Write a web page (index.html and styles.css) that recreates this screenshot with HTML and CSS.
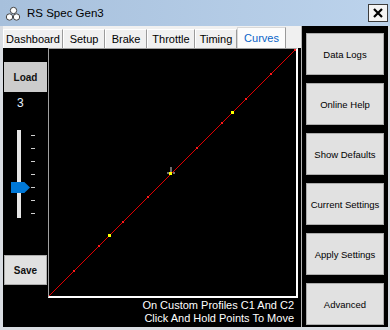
FILE: index.html
```html
<!DOCTYPE html>
<html lang="en">
  <head>
    <meta charset="UTF-8" />
    <title>RS Spec Gen3</title>
    <link rel="stylesheet" href="styles.css">
  </head>
  <body>
    <div class="window">
      <!-- Title bar -->
      <div class="titlebar">
        <svg class="app-icon" width="16" height="16" viewBox="0 0 16 16">
          <circle cx="8.5" cy="4.5" r="3.2" fill="#fff" stroke="#444" stroke-width="1"/>
          <circle cx="4.5" cy="11" r="3.2" fill="#fff" stroke="#444" stroke-width="1"/>
          <circle cx="11.5" cy="11" r="3.2" fill="#fff" stroke="#444" stroke-width="1"/>
        </svg>
        <span class="title">RS Spec Gen3</span>
        <div class="close-btn">
          <svg width="12" height="12" viewBox="0 0 12 12">
            <path d="M2 2 L10 10 M10 2 L2 10" stroke="#000" stroke-width="2.2"/>
          </svg>
        </div>
      </div>

      <div class="content">
        <!-- Left: tabs and the curves page -->
        <div class="main">
          <div class="tabs">
            <div class="tab w60">Dashboard</div>
            <div class="tab w42">Setup</div>
            <div class="tab w42">Brake</div>
            <div class="tab w48">Throttle</div>
            <div class="tab w42">Timing</div>
            <div class="tab w49 active">Curves</div>
          </div>

          <div class="page">
            <!-- Profile selector -->
            <div class="side">
              <button class="side-btn load">Load</button>
              <div class="profile-num">3</div>
              <div class="slider">
                <div class="track"></div>
                <div class="ticks">
                  <span></span><span></span><span></span><span></span>
                  <span></span><span></span><span></span>
                </div>
                <div class="thumb"></div>
              </div>
              <button class="side-btn save">Save</button>
            </div>

            <!-- Curve graph -->
            <div class="graph-col">
              <div class="graph">
                <svg width="247" height="247" viewBox="0 0 247 247">
                  <line x1="0" y1="247" x2="247" y2="0" stroke="#e00000" stroke-width="1"/>
                  <g fill="#ff1a1a">
                    <rect x="24" y="221" width="2" height="2"/>
                    <rect x="49" y="196" width="2" height="2"/>
                    <rect x="73" y="172" width="2" height="2"/>
                    <rect x="98" y="147" width="2" height="2"/>
                    <rect x="147" y="98" width="2" height="2"/>
                    <rect x="172" y="73" width="2" height="2"/>
                    <rect x="196" y="49" width="2" height="2"/>
                    <rect x="221" y="24" width="2" height="2"/>
                    <rect x="245" y="0" width="2" height="2"/>
                  </g>
                  <g fill="#ffff00">
                    <rect x="59" y="185" width="3" height="3"/>
                    <rect x="182" y="62" width="3" height="3"/>
                    <rect x="120" y="123" width="3" height="3"/>
                  </g>
                  <path d="M122 118 V123 M118 124 H120 M124 124 H126" stroke="#ddd" stroke-width="1"/>
                </svg>
              </div>
              <div class="hint">
                On Custom Profiles C1 And C2<br>
                Click And Hold Points To Move
              </div>
            </div>
          </div>
        </div>

        <!-- Right: action buttons -->
        <div class="actions">
          <button class="action-btn">Data Logs</button>
          <button class="action-btn">Online Help</button>
          <button class="action-btn">Show Defaults</button>
          <button class="action-btn">Current Settings</button>
          <button class="action-btn">Apply Settings</button>
          <button class="action-btn">Advanced</button>
        </div>
      </div>
    </div>
  </body>
</html>
```

FILE: styles.css
```css
/* Page and window frame */
body {
  margin: 0;
  font-family: "Liberation Sans", Arial, sans-serif;
  background: #d9dde3;
}

.window {
  width: 390px;
  height: 330px;
  display: flex;
  flex-direction: column;
  background: #d9dde3;
}

/* Title bar */
.titlebar {
  height: 26px;
  display: flex;
  align-items: center;
  padding-left: 5px;
  background: linear-gradient(to right, #a7c0dc, #bcd3ec);
}

.app-icon {
  margin-top: 1px;
}

.title {
  margin-left: 6px;
  font-size: 11.5px;
  color: #000;
}

.close-btn {
  margin-left: auto;
  margin-right: 2px;
  width: 18px;
  height: 16px;
  border: 1px solid #3c3c3c;
  background: #f4f4f4;
  display: flex;
  align-items: center;
  justify-content: center;
}

/* Main content area */
.content {
  flex: 1;
  display: flex;
  margin: 0 2px 3px 3px;
}

.main {
  width: 298px;
  display: flex;
  flex-direction: column;
}

/* Tab strip */
.tabs {
  height: 22px;
  display: flex;
  align-items: flex-end;
  background: #f0f0f0;
}

.tab {
  height: 19px;
  box-sizing: border-box;
  border-left: 1px solid #ffffff;
  border-top: 1px solid #ffffff;
  border-right: 1px solid #9a9a9a;
  font-size: 11px;
  color: #000;
  display: flex;
  align-items: center;
  justify-content: center;
}

.tab.active {
  height: 21px;
  background: #fcfcfc;
  color: #0a64c8;
  border-left: 1px solid #d8d8d8;
  border-top: 1px solid #d8d8d8;
  border-right: 1px solid #9a9a9a;
}

.w60 { width: 60px; }
.w42 { width: 42px; }
.w48 { width: 48px; }
.w49 { width: 49px; }

/* Black tab page */
.page {
  flex: 1;
  display: flex;
  background: #000;
}

/* Profile selector column */
.side {
  width: 45px;
  display: flex;
  flex-direction: column;
  padding-left: 1px;
  box-sizing: border-box;
}

.side-btn {
  width: 43px;
  height: 30px;
  padding: 0;
  font-family: "Liberation Sans", Arial, sans-serif;
  font-size: 10px;
  font-weight: bold;
  color: #111;
  border: 1px solid #adadad;
  background: #e1e1e1;
}

.load {
  margin-top: 14px;
  background: #cccccc;
  border-color: #cccccc;
}

.save {
  margin-top: 37px;
}

.profile-num {
  margin-top: 4px;
  padding-left: 13px;
  height: 14px;
  line-height: 14px;
  font-size: 12px;
  color: #e4f2ff;
}

.slider {
  position: relative;
  margin-top: 20px;
  height: 88px;
  display: flex;
}

.track {
  margin-left: 13px;
  width: 4px;
  background: #e6e6e6;
}

.ticks {
  margin-left: 10px;
  padding-top: 5px;
  display: flex;
  flex-direction: column;
  gap: 12px;
}

.ticks span {
  width: 4px;
  height: 1px;
  background: #d0d0d0;
}

/* Blue slider thumb, pointing right */
.thumb {
  position: absolute;
  left: 7px;
  top: 52px;
  width: 19px;
  height: 11px;
  background: #0078d7;
  clip-path: polygon(0 0, 70% 0, 100% 50%, 70% 100%, 0 100%);
}

/* Graph column */
.graph-col {
  flex: 1;
  display: flex;
  flex-direction: column;
}

.graph {
  width: 250px;
  height: 250px;
  box-sizing: border-box;
  border-top: 1px solid #a0a0a0;
  border-left: 1px solid #a0a0a0;
  border-right: 2px solid #ffffff;
  border-bottom: 2px solid #ffffff;
}

.graph svg {
  display: block;
}

.hint {
  margin-top: 1px;
  padding-right: 7px;
  text-align: right;
  font-size: 11px;
  line-height: 13px;
  color: #fff;
}

/* Right action buttons */
.actions {
  flex: 1;
  background: #000;
  border-left: 1px solid #b4b4b4;
  padding: 7px 4px 0 4px;
  display: flex;
  flex-direction: column;
  gap: 8px;
}

.action-btn {
  width: 78px;
  height: 42px;
  padding: 0;
  font-family: "Liberation Sans", Arial, sans-serif;
  font-size: 9.5px;
  color: #000;
  background: #e1e1e1;
  border: 1px solid #adadad;
}
```
